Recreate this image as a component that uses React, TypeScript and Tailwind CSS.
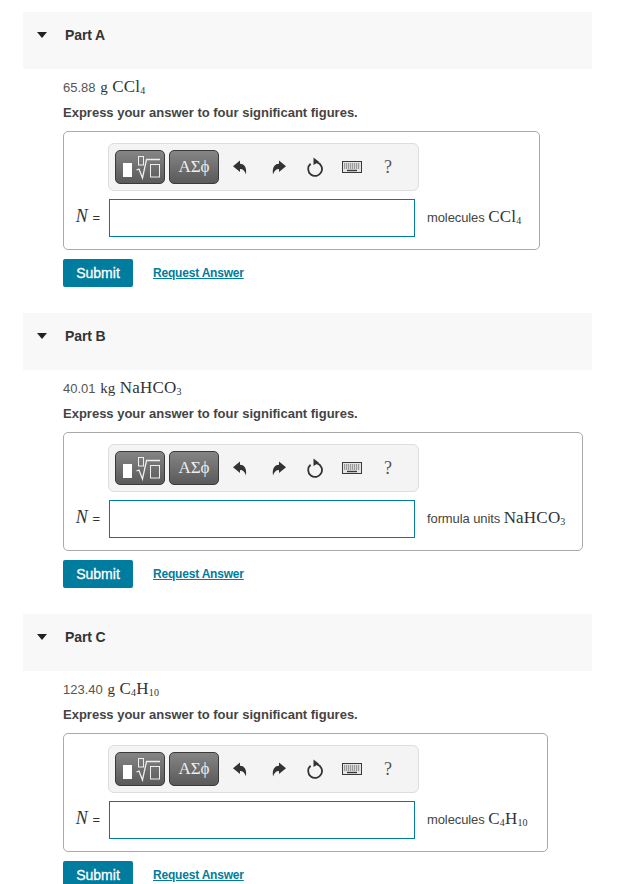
const serif = "font-['Liberation_Serif',serif]";

function Sub({ children }: { children: React.ReactNode }) {
    return <sub className="text-[10px] leading-none align-baseline relative top-[2px]">{children}</sub>;
}

function ToolbarIcons() {
    return (
        <div className="flex items-center ml-[14px]">
            <svg width="14" height="15" viewBox="0 0 14 15" className="text-[#333]" fill="currentColor">
                <path d="M0 6.2 L7 0.5 V3.8 C11 3.8 14 7 13 14.5 C12 11 10 9 7 9 V12 Z" />
            </svg>
            <svg width="14" height="15" viewBox="0 0 14 15" className="text-[#333] ml-[25px]" fill="currentColor">
                <path d="M14 6.2 L7 0.5 V3.8 C3 3.8 0 7 1 14.5 C2 11 4 9 7 9 V12 Z" />
            </svg>
            <svg width="18" height="20" viewBox="0 0 18 20" className="text-[#333] ml-[20px]" fill="none" stroke="currentColor" strokeWidth="1.8">
                <path d="M4.6 6.8 A6.9 6.9 0 1 0 11 5.4" />
                <path d="M7.5 0.5 L13 4.8 L7.5 8 Z" fill="currentColor" stroke="none" />
            </svg>
            <svg width="20" height="12" viewBox="0 0 20 12" className="ml-[18px]" fill="none">
                <rect x="0.5" y="0.5" width="19" height="11" fill="#e4e4e4" stroke="#3a3a3a" />
                <path d="M2 3 H18 M2 5 H18 M2 7 H18" stroke="#555" strokeWidth="1.2" strokeDasharray="1.2 0.8" />
                <path d="M5 9.5 H15" stroke="#3a3a3a" strokeWidth="1.4" />
            </svg>
            <span className={`${serif} text-[18px] leading-none text-[#555] ml-[22px]`}>?</span>
        </div>
    );
}

function Toolbar() {
    const btn =
        "h-[34px] flex items-center justify-center rounded-[5px] border border-[#3a3a3a] bg-gradient-to-b from-[#858585] to-[#5a5a5a]";
    return (
        <div className="ml-[44px] w-[311px] h-[48px] flex items-center pl-[6px] rounded-[6px] border border-[#ddd] bg-[#f4f4f4]">
            <div className={`${btn} w-[50px]`}>
                <svg width="48" height="32" viewBox="0 0 48 32" fill="none" stroke="#eee" strokeWidth="1">
                    <rect x="7" y="12" width="9" height="14" fill="#fff" stroke="none" />
                    <rect x="22.5" y="5.5" width="5" height="8.5" />
                    <path d="M20.5 19 L23 18 L26.5 27 L30.5 8.5 H44" strokeWidth="1.3" />
                    <rect x="34.5" y="13.5" width="9" height="12.5" />
                </svg>
            </div>
            <div className={`${btn} w-[50px] ml-[4px] ${serif} text-[17px] text-[#eee]`}>ΑΣϕ</div>
            <ToolbarIcons />
        </div>
    );
}

function Part({ label, quantity, unit, boxWidth }: { label: string; quantity: React.ReactNode; unit: React.ReactNode; boxWidth: string }) {
    return (
        <section className="mb-[26px]">
            <div className="h-[57px] bg-[#f8f8f8] flex items-start pt-[14px] pl-[14px]">
                <svg width="10" height="6" viewBox="0 0 10 6" className="mt-[6px]" fill="#222">
                    <path d="M0 0 H10 L5 6 Z" />
                </svg>
                <span className="ml-[18px] text-[14px] leading-[18px] font-bold text-[#333] tracking-[-0.1px]">{label}</span>
            </div>
            <div className="pl-[40px]">
                <div className="mt-[9px] h-[18px] text-[13px] leading-[18px] text-[#555]">{quantity}</div>
                <div className="mt-[8px] h-[18px] text-[13px] leading-[18px] font-bold text-[#444]">Express your answer to four significant figures.</div>
                <div className={`mt-[9px] h-[119px] ${boxWidth} rounded-[5px] border border-[#aaa] pt-[11px]`}>
                    <Toolbar />
                    <div className="mt-[8px] flex items-center">
                        <span className="w-[45px] pr-[9px] text-right text-[13px] leading-[18px] text-[#333] whitespace-nowrap -translate-y-px">
                            <i className={`${serif} text-[18px] mr-[1px]`}>N</i> =
                        </span>
                        <div className="w-[306px] h-[38px] border border-[#007c9e] bg-white" />
                        <span className="ml-[12px] text-[13px] leading-[18px] text-[#444] whitespace-nowrap -translate-y-px tracking-[-0.1px]">{unit}</span>
                    </div>
                </div>
                <div className="mt-[9px] flex items-center">
                    <button className="w-[70px] h-[28px] rounded-[2px] bg-[#007c9e] text-white text-[14px] font-normal [-webkit-text-stroke:0.3px_white]">Submit</button>
                    <a className="ml-[20px] text-[12px] font-bold text-[#007c9e] underline tracking-[-0.2px]">Request Answer</a>
                </div>
            </div>
        </section>
    );
}

function Chem({ children }: { children: React.ReactNode }) {
    return <span className={`${serif} text-[17px] tracking-[0.2px] text-[#333]`}>{children}</span>;
}

function Unit({ children }: { children: React.ReactNode }) {
    return <span className={`${serif} text-[15px] text-[#333] mx-[1px]`}>{children}</span>;
}

export default function App() {
    return (
        <div className="w-[617px] h-[884px] overflow-hidden bg-white font-['Liberation_Sans',sans-serif]">
            <div className="pt-[12px] pl-[23px] w-[592px]">
                <Part
                    label="Part A"
                    boxWidth="w-[477px]"
                    quantity={<>65.88 <Unit>g</Unit> <Chem>CCl<Sub>4</Sub></Chem></>}
                    unit={<>molecules <Chem>CCl<Sub>4</Sub></Chem></>}
                />
                <Part
                    label="Part B"
                    boxWidth="w-[520px]"
                    quantity={<>40.01 <Unit>kg</Unit> <Chem>NaHCO<Sub>3</Sub></Chem></>}
                    unit={<>formula units <Chem>NaHCO<Sub>3</Sub></Chem></>}
                />
                <Part
                    label="Part C"
                    boxWidth="w-[485px]"
                    quantity={<>123.40 <Unit>g</Unit> <Chem>C<Sub>4</Sub>H<Sub>10</Sub></Chem></>}
                    unit={<>molecules <Chem>C<Sub>4</Sub>H<Sub>10</Sub></Chem></>}
                />
            </div>
        </div>
    );
}
